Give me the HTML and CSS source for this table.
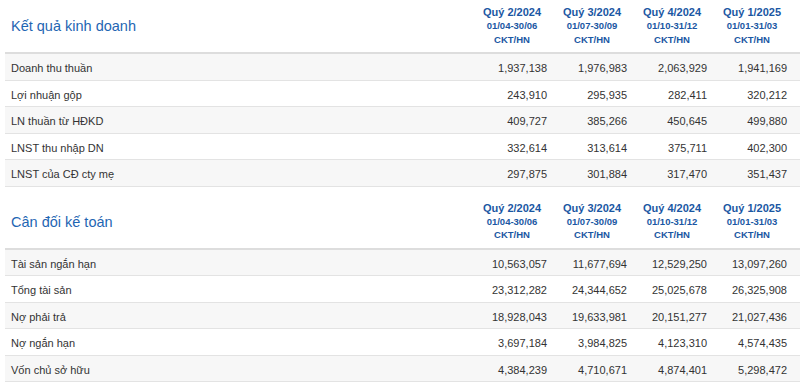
FILE: index.html
```html
<!DOCTYPE html>
<html lang="vi">
<head>
<meta charset="utf-8">
<title>Kết quả kinh doanh</title>
<link rel="stylesheet" href="styles.css">
</head>
<body>
<section class="fin">
  <div class="head">
    <h2 class="title">Kết quả kinh doanh</h2>
    <div class="period"><b>Quý 2/2024</b><span>01/04-30/06</span><span>CKT/HN</span></div>
    <div class="period"><b>Quý 3/2024</b><span>01/07-30/09</span><span>CKT/HN</span></div>
    <div class="period"><b>Quý 4/2024</b><span>01/10-31/12</span><span>CKT/HN</span></div>
    <div class="period"><b>Quý 1/2025</b><span>01/01-31/03</span><span>CKT/HN</span></div>
  </div>
  <div class="row"><span class="label">Doanh thu thuần</span><span class="num">1,937,138</span><span class="num">1,976,983</span><span class="num">2,063,929</span><span class="num">1,941,169</span></div>
  <div class="row"><span class="label">Lợi nhuận gộp</span><span class="num">243,910</span><span class="num">295,935</span><span class="num">282,411</span><span class="num">320,212</span></div>
  <div class="row"><span class="label">LN thuần từ HĐKD</span><span class="num">409,727</span><span class="num">385,266</span><span class="num">450,645</span><span class="num">499,880</span></div>
  <div class="row"><span class="label">LNST thu nhập DN</span><span class="num">332,614</span><span class="num">313,614</span><span class="num">375,711</span><span class="num">402,300</span></div>
  <div class="row"><span class="label">LNST của CĐ cty mẹ</span><span class="num">297,875</span><span class="num">301,884</span><span class="num">317,470</span><span class="num">351,437</span></div>
</section>
<section class="fin">
  <div class="head">
    <h2 class="title">Cân đối kế toán</h2>
    <div class="period"><b>Quý 2/2024</b><span>01/04-30/06</span><span>CKT/HN</span></div>
    <div class="period"><b>Quý 3/2024</b><span>01/07-30/09</span><span>CKT/HN</span></div>
    <div class="period"><b>Quý 4/2024</b><span>01/10-31/12</span><span>CKT/HN</span></div>
    <div class="period"><b>Quý 1/2025</b><span>01/01-31/03</span><span>CKT/HN</span></div>
  </div>
  <div class="row"><span class="label">Tài sản ngắn hạn</span><span class="num">10,563,057</span><span class="num">11,677,694</span><span class="num">12,529,250</span><span class="num">13,097,260</span></div>
  <div class="row"><span class="label">Tổng tài sản</span><span class="num">23,312,282</span><span class="num">24,344,652</span><span class="num">25,025,678</span><span class="num">26,325,908</span></div>
  <div class="row"><span class="label">Nợ phải trả</span><span class="num">18,928,043</span><span class="num">19,633,981</span><span class="num">20,151,277</span><span class="num">21,027,436</span></div>
  <div class="row"><span class="label">Nợ ngắn hạn</span><span class="num">3,697,184</span><span class="num">3,984,825</span><span class="num">4,123,310</span><span class="num">4,574,435</span></div>
  <div class="row"><span class="label">Vốn chủ sở hữu</span><span class="num">4,384,239</span><span class="num">4,710,671</span><span class="num">4,874,401</span><span class="num">5,298,472</span></div>
</section>
</body>
</html>
```
FILE: styles.css
```css
html, body {
  margin: 0;
  padding: 0;
  background: #ffffff;
}
body {
  font-family: Arial, "Liberation Sans", sans-serif;
  color: #333333;
  overflow: hidden;
}
.fin {
  margin-left: 5px;
}
.fin + .fin {
  margin-top: 9px;
}
.head,
.row {
  display: grid;
  grid-template-columns: 1fr repeat(4, 80px);
  padding: 0 8px 0 6px;
}
.head {
  height: 52px;
  border-bottom: 2px solid #dddddd;
  align-items: center;
}
.title {
  margin: 0;
  font-size: 14.5px;
  font-weight: normal;
  color: #1f66b3;
}
.period {
  display: flex;
  flex-direction: column;
  align-items: center;
  line-height: 13.3px;
  color: #1a57a3;
  font-weight: bold;
  font-size: 9.5px;
}
.period b {
  font-size: 11px;
}
.row {
  font-size: 11px;
  line-height: 14px;
  border-bottom: 1px solid #e3e3e3;
  padding-top: 7px;
  padding-bottom: 4.5px;
}
.row:nth-of-type(even) {
  background: #f7f7f7;
}
.num {
  text-align: right;
  padding-right: 5px;
}
```
